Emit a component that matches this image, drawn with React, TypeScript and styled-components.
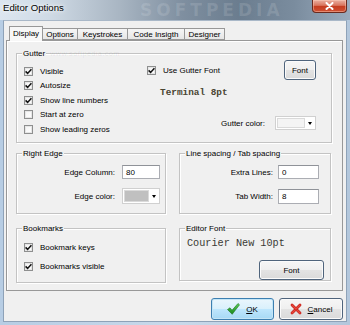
import React from "react";
import styled, { createGlobalStyle } from "styled-components";

const Global = createGlobalStyle`
  html, body { margin: 0; padding: 0; }
  body {
    width: 350px; height: 325px; overflow: hidden;
    font-family: "Liberation Sans", Arial, sans-serif;
    font-size: 8px; color: #000;
  }
`;

const Window = styled.div`
  width: 350px; height: 325px; box-sizing: border-box;
  display: flex; flex-direction: column;
  background: linear-gradient(90deg, #b7cde4, #c9d9ea 50%, #b3c7dc);
`;

const TitleBar = styled.div`
  height: 20px; flex: none; position: relative; overflow: hidden;
  display: flex; align-items: flex-start;
  background: linear-gradient(90deg, #dce6f0 0%, #cfdae5 14%, #a9b6c3 34%, #7f8fa0 52%, #6b7d8f 68%, #7a8c9e 84%, #9aabbd 100%);
`;

const Title = styled.span`
  font-size: 9.6px; line-height: 15px; padding-left: 3px;
  color: #000; text-shadow: 0 0 6px #fff, 0 0 3px #fff;
  position: relative; z-index: 1;
`;

const TitleWatermark = styled.span`
  position: absolute; left: 140px; top: 1px;
  font-family: "DejaVu Sans", sans-serif; font-weight: bold;
  font-size: 17px; line-height: 18px; letter-spacing: 4px; color: rgba(255,255,255,0.13);
`;

const CloseButton = styled.div`
  margin-left: auto; margin-right: 3px; width: 35px; height: 13px;
  box-sizing: border-box; border: 1px solid #6b2a1e; border-top: none;
  border-radius: 0 0 4px 4px; position: relative; z-index: 1;
  background: linear-gradient(#eab0a2 0%, #d9765e 45%, #c53d20 52%, #cf5134 100%);
  box-shadow: inset 0 0 0 1px rgba(255,210,190,0.45);
  display: flex; align-items: center; justify-content: center;
`;

const Client = styled.div`
  flex: 1; margin: 0 3px 3px 3px; box-sizing: border-box;
  background: #f0f0f0; border: 1px solid #8ea2b8; border-top-color: #a9b8c8;
  padding: 5px 3px 1px 2px; display: flex; flex-direction: column;
`;

const TabRow = styled.div`
  display: flex; align-items: flex-end; height: 14px; padding-left: 3px;
  position: relative; z-index: 2;
`;

const Tab = styled.div<{ $w: number; $active?: boolean }>`
  width: ${(p) => p.$w}px; box-sizing: border-box;
  height: ${(p) => (p.$active ? 15 : 12)}px;
  margin-bottom: ${(p) => (p.$active ? -1 : 0)}px;
  margin-left: -1px;
  border: 1px solid #989898;
  border-bottom: ${(p) => (p.$active ? "none" : "1px solid #989898")};
  background: ${(p) => (p.$active ? "#f7f7f7" : "linear-gradient(#f6f6f6, #e6e6e6)")};
  display: flex; align-items: center; justify-content: center;
  padding-bottom: ${(p) => (p.$active ? 2 : 0)}px;
  font-size: 8px; white-space: nowrap;
  &:first-child { margin-left: 0; }
`;

const Panel = styled.div`
  height: 251px; flex: none; box-sizing: border-box;
  border: 1px solid #989898; background: #f0f0f0;
  box-shadow: inset 1px 1px 0 #fff;
  padding: 12px 10px 0 9px;
  display: flex; flex-direction: column;
`;

const GroupRow = styled.div<{ $top: number }>`
  display: grid; grid-template-columns: 150px 152px; column-gap: 13px;
  margin-top: ${(p) => p.$top}px;
`;

const GroupBox = styled.div<{ $h: number }>`
  position: relative; box-sizing: border-box; height: ${(p) => p.$h}px;
  border: 1px solid #c3c3c3;
  box-shadow: inset 1px 1px 0 #fff, 1px 1px 0 #fff;
`;

const Caption = styled.span`
  position: absolute; left: 5px; top: -6px; padding: 0 1px;
  background: #f0f0f0; line-height: 11px; font-size: 8px; white-space: nowrap;
`;

const SiteMark = styled.span`
  position: absolute; left: 33px; top: -5px; font-size: 7.5px;
  color: rgba(0,0,0,0.07); letter-spacing: 0.3px;
`;

const GutterBody = styled.div`
  display: flex; height: 100%; box-sizing: border-box; padding: 6px 15px 0 7px;
`;

const CheckColumn = styled.div<{ $w?: number; $pt: number; $gap?: number; $pl?: number }>`
  display: flex; flex-direction: column; padding-top: ${(p) => p.$pt}px;
  padding-left: ${(p) => p.$pl ?? 0}px;
  gap: ${(p) => p.$gap ?? 0}px;
  width: ${(p) => (p.$w ? `${p.$w}px` : "auto")}; flex: none;
`;

const CheckRow = styled.label<{ $h: number }>`
  display: flex; align-items: center; height: ${(p) => p.$h}px; white-space: nowrap;
`;

const CheckBox = styled.span`
  width: 9px; height: 9px; box-sizing: border-box; flex: none;
  border: 1px solid #8e8f8f; background: linear-gradient(135deg, #f4f4f4, #fff);
  box-shadow: inset 0 0 0 1px #e6e6e6;
  margin-right: 7px; display: flex; align-items: center; justify-content: center;
`;

const RightArea = styled.div`
  flex: 1; display: flex; flex-direction: column;
`;

const FontRow = styled.div`
  display: flex; align-items: center; height: 20px;
`;

const MonoText = styled.div<{ $size: number; $bold?: boolean }>`
  font-family: "Liberation Mono", "Courier New", monospace;
  font-size: ${(p) => p.$size}px; font-weight: ${(p) => (p.$bold ? "bold" : "normal")};
  color: ${(p) => (p.$bold ? "#4a4532" : "#3a3a34")}; line-height: 12px; white-space: nowrap;
`;

const TerminalLine = styled.div`
  margin-top: 7px; padding-left: 13px;
`;

const FieldRow = styled.div<{ $top: number; $gap: number }>`
  display: flex; align-items: center; justify-content: flex-end;
  margin-top: ${(p) => p.$top}px; gap: ${(p) => p.$gap}px;
`;

const FieldLabel = styled.span`
  white-space: nowrap;
`;

const TextInput = styled.div<{ $w: number; $h?: number }>`
  width: ${(p) => p.$w}px; height: ${(p) => p.$h ?? 14}px; box-sizing: border-box;
  background: #fff; border: 1px solid #abadb3; border-top-color: #8f9298;
  padding-left: 3px; display: flex; align-items: center;
`;

const ColorCombo = styled.div<{ $w: number; $h: number }>`
  width: ${(p) => p.$w}px; height: ${(p) => p.$h}px; box-sizing: border-box;
  display: flex; background: #fff; border: 1px solid #d0d0d0; padding: 1px;
  gap: 1px;
`;

const Swatch = styled.div<{ $color: string }>`
  flex: 1; background: ${(p) => p.$color}; border: 1px solid #dadada;
`;

const ComboArrow = styled.div`
  width: 8px; display: flex; align-items: center; justify-content: center;
  &::after {
    content: ""; border-left: 2.5px solid transparent; border-right: 2.5px solid transparent;
    border-top: 3px solid #000;
  }
`;

const SpacedBody = styled.div<{ $pr: number }>`
  display: flex; flex-direction: column; padding: 11px ${(p) => p.$pr}px 0 0;
`;

const EditorBody = styled.div`
  display: flex; flex-direction: column; padding: 9px 6px 0 7px;
`;

const PushButton = styled.div<{ $w: number; $h: number; $focus?: boolean; $push?: boolean }>`
  width: ${(p) => p.$w}px; height: ${(p) => p.$h}px; box-sizing: border-box; flex: none;
  margin-left: ${(p) => (p.$push ? "auto" : "0")};
  border: 1px solid ${(p) => (p.$focus ? "#3c7fb1" : "#4f647c")};
  border-radius: 3px;
  background: ${(p) =>
    p.$focus
      ? "linear-gradient(#eaf6fd 0%, #d9f0fc 50%, #bee6fd 51%, #a7d9f5 100%)"
      : "linear-gradient(#f6f6f6 0%, #efefef 50%, #e3e3e3 51%, #dadada 100%)"};
  box-shadow: inset 0 0 0 1px ${(p) => (p.$focus ? "#c4e5f6" : "#fbfbfb")};
  display: flex; align-items: center; justify-content: center; gap: 6px;
  font-size: 8px; white-space: nowrap;
`;

const FontButtonWrap = styled.div`
  display: flex; justify-content: flex-end; margin-top: 10px;
`;

const ButtonBar = styled.div`
  display: flex; justify-content: flex-end; gap: 5px; margin-top: 7px;
`;

const Check: React.FC<{ on?: boolean; label: string; h: number }> = ({ on, label, h }) => (
  <CheckRow $h={h}>
    <CheckBox>
      {on && (
        <svg width="7" height="7" viewBox="0 0 7 7">
          <path d="M0.6 3.4 L2.6 5.4 L6.4 1.2" stroke="#111" strokeWidth="1.5" fill="none" />
        </svg>
      )}
    </CheckBox>
    {label}
  </CheckRow>
);

export default function App() {
  return (
    <>
      <Global />
      <Window>
        <TitleBar>
          <TitleWatermark>SOFTPEDIA</TitleWatermark>
          <Title>Editor Options</Title>
          <CloseButton>
            <svg width="9" height="8" viewBox="0 0 9 8">
              <path d="M1.5 1 L7.5 7 M7.5 1 L1.5 7" stroke="#fff" strokeWidth="2" strokeLinecap="round" />
            </svg>
          </CloseButton>
        </TitleBar>
        <Client>
          <TabRow>
            <Tab $w={34} $active>Display</Tab>
            <Tab $w={36}>Options</Tab>
            <Tab $w={51}>Keystrokes</Tab>
            <Tab $w={58}>Code Insigth</Tab>
            <Tab $w={41}>Designer</Tab>
          </TabRow>
          <Panel>
            <GroupBox $h={90}>
              <Caption>Gutter</Caption>
              <SiteMark>www.softpedia.com</SiteMark>
              <GutterBody>
                <CheckColumn $w={123} $pt={4}>
                  <Check on label="Visible" h={14.5} />
                  <Check on label="Autosize" h={14.5} />
                  <Check on label="Show line numbers" h={14.5} />
                  <Check label="Start at zero" h={14.5} />
                  <Check label="Show leading zeros" h={14.5} />
                </CheckColumn>
                <RightArea>
                  <FontRow>
                    <Check on label="Use Gutter Font" h={20} />
                    <PushButton $w={32} $h={20} $push>Font</PushButton>
                  </FontRow>
                  <TerminalLine>
                    <MonoText $size={9.4} $bold>Terminal 8pt</MonoText>
                  </TerminalLine>
                  <FieldRow $top={17} $gap={10}>
                    <FieldLabel>Gutter color:</FieldLabel>
                    <ColorCombo $w={41} $h={14}>
                      <Swatch $color="#f4f4f4" />
                      <ComboArrow />
                    </ColorCombo>
                  </FieldRow>
                </RightArea>
              </GutterBody>
            </GroupBox>
            <GroupRow $top={10}>
              <GroupBox $h={61}>
                <Caption>Right Edge</Caption>
                <SpacedBody $pr={5}>
                  <FieldRow $top={0} $gap={7}>
                    <FieldLabel>Edge Column:</FieldLabel>
                    <TextInput $w={38}>80</TextInput>
                  </FieldRow>
                  <FieldRow $top={9} $gap={7}>
                    <FieldLabel>Edge color:</FieldLabel>
                    <ColorCombo $w={38} $h={16}>
                      <Swatch $color="#c0c0c0" />
                      <ComboArrow />
                    </ColorCombo>
                  </FieldRow>
                </SpacedBody>
              </GroupBox>
              <GroupBox $h={61}>
                <Caption>Line spacing / Tab spacing</Caption>
                <SpacedBody $pr={11}>
                  <FieldRow $top={0} $gap={5}>
                    <FieldLabel>Extra Lines:</FieldLabel>
                    <TextInput $w={41}>0</TextInput>
                  </FieldRow>
                  <FieldRow $top={10} $gap={5}>
                    <FieldLabel>Tab Width:</FieldLabel>
                    <TextInput $w={41} $h={15}>8</TextInput>
                  </FieldRow>
                </SpacedBody>
              </GroupBox>
            </GroupRow>
            <GroupRow $top={14}>
              <GroupBox $h={55}>
                <Caption>Bookmarks</Caption>
                <CheckColumn $pt={11} $gap={5} $pl={7}>
                  <Check on label="Bookmark keys" h={14} />
                  <Check on label="Bookmarks visible" h={14} />
                </CheckColumn>
              </GroupBox>
              <GroupBox $h={53}>
                <Caption>Editor Font</Caption>
                <EditorBody>
                  <MonoText $size={10.2}>Courier New 10pt</MonoText>
                  <FontButtonWrap>
                    <PushButton $w={65} $h={20}>Font</PushButton>
                  </FontButtonWrap>
                </EditorBody>
              </GroupBox>
            </GroupRow>
          </Panel>
          <ButtonBar>
            <PushButton $w={63} $h={22} $focus>
              <svg width="13" height="12" viewBox="0 0 13 12">
                <defs>
                  <linearGradient id="okg" x1="0" y1="0" x2="0" y2="1">
                    <stop offset="0" stopColor="#5fd35a" />
                    <stop offset="1" stopColor="#15861a" />
                  </linearGradient>
                </defs>
                <path d="M0.5 6.5 L3 4.8 L5 7.3 L11 0.5 L12.5 1.8 L5.2 11.3 Z" fill="url(#okg)" stroke="#1d6e1f" strokeWidth="0.6" />
              </svg>
              <span><u>O</u>K</span>
            </PushButton>
            <PushButton $w={64} $h={22}>
              <svg width="12" height="12" viewBox="0 0 12 12">
                <path d="M2 2 L10 10 M10 2 L2 10" stroke="#c8211a" strokeWidth="2.8" strokeLinecap="round" />
                <path d="M2 2 L10 10 M10 2 L2 10" stroke="#e8493d" strokeWidth="1.2" strokeLinecap="round" />
              </svg>
              <span><u>C</u>ancel</span>
            </PushButton>
          </ButtonBar>
        </Client>
      </Window>
    </>
  );
}
